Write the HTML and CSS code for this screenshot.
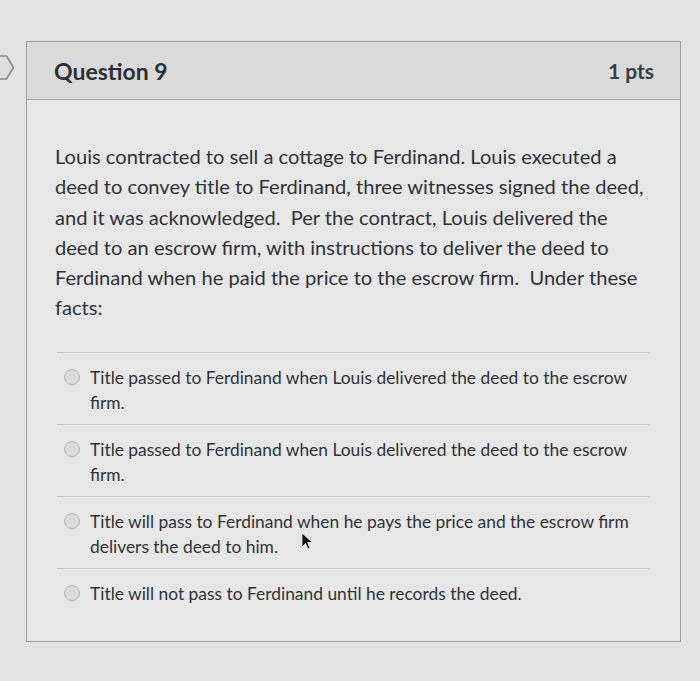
FILE: index.html
```
<!DOCTYPE html>
<html lang="en">
<head>
<meta charset="utf-8">
<title>Question 9</title>
<link rel="stylesheet" href="styles.css">
</head>
<body>
<div class="page">
  <div class="side">
    <svg class="flag" width="15" height="27" viewBox="0 0 15 27"><path d="M-6 2 H6.5 L13.5 13.5 L6.5 25 H-6" fill="#dedede" stroke="#8c8c8c" stroke-width="1.6" stroke-linejoin="round"/></svg>
  </div>
  <div class="card">
    <div class="card-head">
      <h2 class="q-title">Question 9</h2>
      <span class="q-pts">1 pts</span>
    </div>
    <div class="card-body">
      <p class="q-text">Louis contracted to sell a cottage to Ferdinand. Louis executed a deed to convey title to Ferdinand, three witnesses signed the deed, and it was acknowledged.&nbsp; Per the contract, Louis delivered the deed to an escrow firm, with instructions to deliver the deed to Ferdinand when he paid the price to the escrow firm.&nbsp; Under these facts:</p>
      <div class="answers">
        <label class="answer"><span class="radio"></span><span class="a-text">Title passed to Ferdinand when Louis delivered the deed to the escrow firm.</span></label>
        <label class="answer"><span class="radio"></span><span class="a-text">Title passed to Ferdinand when Louis delivered the deed to the escrow firm.</span></label>
        <label class="answer"><span class="radio"></span><span class="a-text">Title will pass to Ferdinand when he pays the price and the escrow firm delivers the deed to him.</span></label>
        <label class="answer"><span class="radio"></span><span class="a-text">Title will not pass to Ferdinand until he records the deed.</span></label>
      </div>
    </div>
  </div>
  <svg class="cursor" width="14" height="20" viewBox="0 0 14 20"><path d="M1 1 L1 15 L4.5 11.5 L7 17 L9 16 L6.6 10.6 L11.5 10.6 Z" fill="#111" stroke="#eee" stroke-width="0.8"/></svg>
</div>
</body>
</html>
```
FILE: styles.css
```
html, body {
  margin: 0;
  padding: 0;
}
body {
  background: #e3e3e3;
  font-family: Lato, "Open Sans", "Liberation Sans", sans-serif;
  color: #2f3337;
}
.page {
  position: relative;
  display: flex;
  align-items: flex-start;
  padding-top: 41px;
  height: 640px;
}
.side {
  width: 26px;
  flex: none;
  padding-top: 13px;
}
.flag {
  display: block;
}
.card {
  width: 653px;
  border: 1px solid #9e9e9e;
  background: #e7e7e7;
}
.card-head {
  height: 57px;
  background: #dadada;
  border-bottom: 1px solid #a3a3a3;
  display: flex;
  align-items: center;
  justify-content: space-between;
  padding: 0 26px 0 27px;
}
.q-title {
  margin: 0;
  font-size: 23px;
  font-weight: 700;
  color: #2c3034;
}
.q-pts {
  font-size: 21px;
  font-weight: 700;
  color: #3a3e43;
}
.card-body {
  padding: 41px 30px 35px 28px;
}
.q-text {
  margin: 0;
  font-size: 20.1px;
  line-height: 30.3px;
  max-width: 592px;
}
.answers {
  margin-top: 29px;
  margin-left: 2px;
}
.answer {
  display: flex;
  align-items: flex-start;
  border-top: 1px solid #c9c9c9;
  padding: 12px 0 9px 7px;
  font-size: 17.4px;
  line-height: 25px;
}
.answer:last-child {
  padding-bottom: 0;
}
.radio {
  flex: none;
  width: 14px;
  height: 14px;
  border: 1px solid #b5b5b5;
  border-radius: 50%;
  background: #dcdcdc;
  margin-top: 4px;
  margin-right: 10px;
}
.a-text {
  color: #2f3337;
}
.cursor {
  position: absolute;
  left: 301px;
  top: 532px;
}
```
